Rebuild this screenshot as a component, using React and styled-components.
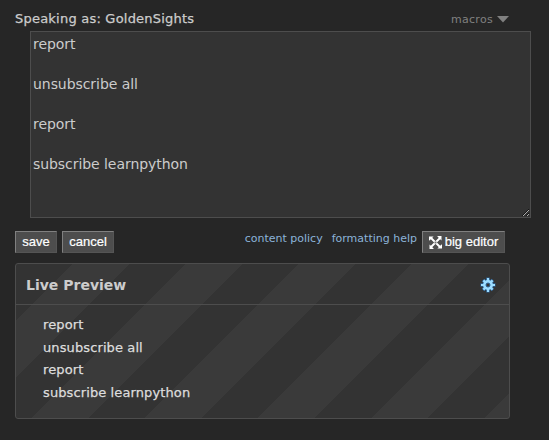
import React from 'react';
import styled, { createGlobalStyle } from 'styled-components';

const GlobalStyle = createGlobalStyle`
  * { box-sizing: border-box; }
  body {
    margin: 0;
    background: #262626;
    color: #ccc;
    font-family: Verdana, "DejaVu Sans", sans-serif;
    overflow: hidden;
  }
`;

const Form = styled.main`
  width: 549px;
  height: 440px;
  padding: 8px 0 0 15px;
`;

const TopBar = styled.header`
  display: flex;
  justify-content: space-between;
  width: 495px;
  height: 23px;
  line-height: 22px;
  white-space: nowrap;
`;

const Speaker = styled.span`
  font-size: 13px;
  letter-spacing: 0.22px;
  -webkit-text-stroke: 0.25px #ccc;
`;

const Macros = styled.span`
  display: flex;
  gap: 4px;
  margin-right: 1px;
  font-size: 11px;
  letter-spacing: 0.3px;
  line-height: 23px;
  color: #808080;

  svg { margin-top: 8px; }
`;

const Editor = styled.textarea`
  display: block;
  width: 501px;
  height: 187px;
  margin: 0 0 0 15px;
  padding: 2px;
  border: 1px solid #4d4d4d;
  border-radius: 0;
  outline: none;
  background: #333;
  color: #ccc;
  font: 14px/20px Verdana, "DejaVu Sans", sans-serif;
  letter-spacing: -0.06px;
  resize: both;
  overflow: auto;
`;

const Actions = styled.div`
  display: flex;
  width: 490px;
  height: 22px;
  margin-top: 13px;
`;

const Button = styled.button`
  display: flex;
  align-items: center;
  justify-content: center;
  flex: none;
  gap: 3px;
  width: ${p => p.$width}px;
  height: 22px;
  margin-right: ${p => p.$gap || 0}px;
  padding: 0;
  border: 1px solid;
  border-color: #808080 #555 #555 #808080;
  background: #4d4d4d;
  color: #fff;
  font: 13px/20px Arial, "Liberation Sans", sans-serif;
  -webkit-text-stroke: 0.2px #fff;
  white-space: nowrap;
`;

const Links = styled.nav`
  display: flex;
  gap: 9px;
  margin-left: auto;
  margin-right: 5px;
  line-height: 15px;
`;

const HelpLink = styled.a`
  color: #8cb3d9;
  font-size: 11px;
  white-space: nowrap;
`;

const Preview = styled.section`
  width: 495px;
  height: 156px;
  margin-top: 10px;
  border: 1px solid #4d4d4d;
  border-radius: 3px;
  background: repeating-linear-gradient(135deg, #333 0 40px, #3a3a3a 40px 80px);
`;

const PreviewHeader = styled.div`
  display: flex;
  align-items: center;
  justify-content: space-between;
  height: 41px;
  padding: 2px 13px 0 10px;
  border-bottom: 1px solid #4d4d4d;
`;

const Title = styled.h2`
  margin: 0;
  font-size: 14px;
  line-height: 20px;
`;

const Lines = styled.div`
  padding: 9px 0 0 27px;
`;

const Line = styled.p`
  margin: 0;
  color: #ddd;
  font-size: 13px;
  line-height: 22.7px;
  letter-spacing: 0.11px;
  -webkit-text-stroke: 0.25px #ddd;
`;

const Caret = () => (
  <svg width="12" height="7" viewBox="0 0 12 7"><path d="M0 0h12L6 6.5z" fill="#808080" /></svg>
);

const Expand = () => (
  <svg width="13" height="13" viewBox="0 0 13 13">
    <g fill="#fff">
      <path d="M0 0.5h4.6L0.5 4.6H0zM12.5 0v4.6L8.4 0.5V0zM13 12.5H8.4L12.5 8.4H13zM0.5 13V8.4L4.6 12.5V13z" />
    </g>
    <path d="M2 2l9 9M11 2l-9 9" stroke="#fff" strokeWidth="1.9" />
    <rect x="5.5" y="5.5" width="2" height="2" fill="#777" />
  </svg>
);

const Gear = () => (
  <svg width="16" height="16" viewBox="0 0 16 16">
    <g stroke="#2c6092" strokeWidth="3.6">
      <path d="M8 0.5v15M0.5 8h15M3 3l10 10M13 3l-10 10" />
    </g>
    <circle cx="8" cy="8" r="5.7" fill="#2c6092" />
    <g stroke="#9bdcff" strokeWidth="2.2">
      <path d="M8 1v14M1 8h14M3.4 3.4l9.2 9.2M12.6 3.4l-9.2 9.2" />
    </g>
    <circle cx="8" cy="8" r="4.9" fill="#9bdcff" />
    <circle cx="8" cy="8" r="2" fill="#333" stroke="#2c6092" />
  </svg>
);

const DRAFT = ['report', 'unsubscribe all', 'report', 'subscribe learnpython'];

export default function App() {
  return (
    <>
      <GlobalStyle />
      <Form>
        <TopBar>
          <Speaker>Speaking as: GoldenSights</Speaker>
          <Macros>macros <Caret /></Macros>
        </TopBar>
        <Editor spellCheck={false} defaultValue={DRAFT.join('\n\n')} />
        <Actions>
          <Button $width={42} $gap={5}>save</Button>
          <Button $width={52}>cancel</Button>
          <Links>
            <HelpLink>content policy</HelpLink>
            <HelpLink>formatting help</HelpLink>
          </Links>
          <Button $width={83}><Expand />big editor</Button>
        </Actions>
        <Preview>
          <PreviewHeader>
            <Title>Live Preview</Title>
            <Gear />
          </PreviewHeader>
          <Lines>
            {DRAFT.map((text, i) => <Line key={i}>{text}</Line>)}
          </Lines>
        </Preview>
      </Form>
    </>
  );
}
